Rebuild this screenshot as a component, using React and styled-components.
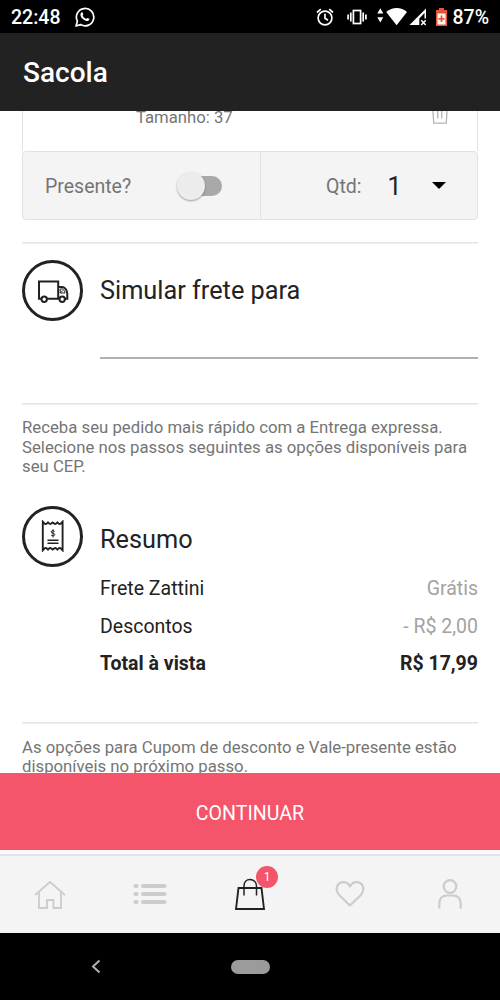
import { useState } from "react";
import styled, { createGlobalStyle } from "styled-components";

const GlobalStyle=createGlobalStyle`
  *{
    box-sizing: border-box;
  }
  body{
    margin: 0;
    background-color: #ffffff;
  }
  p, h1, h2{
    margin: 0;
    font-weight: 400;
  }
`
const Screen=styled.div`
  width: 500px;
  height: 1000px;
  display: flex;
  flex-direction: column;
  overflow: hidden;
  background-color: #ffffff;
  font-family: Roboto, "Liberation Sans", sans-serif;
  color: #222222;
`
const StatusBar=styled.div`
  height: 33px;
  flex-shrink: 0;
  display: flex;
  align-items: center;
  justify-content: space-between;
  padding: 1px 11px 0 11px;
  background-color: #000000;
  color: #ffffff;
`
const StatusGroup=styled.div`
  display: flex;
  align-items: center;
`
const StatusText=styled.p`
  margin-left: ${props=>props.$gap || 0}px;
  padding-top: 2px;
  font-size: 19.5px;
  line-height: 24px;
  font-weight: 500;
`
const StatusIcon=styled.svg`
  display: block;
  margin-left: ${props=>props.$gap || 0}px;
`
const Header=styled.header`
  height: 78px;
  flex-shrink: 0;
  display: flex;
  align-items: center;
  padding: 2px 23px 0 23px;
  background-color: #222222;
`
const Title=styled.h1`
  font-size: 28px;
  line-height: 32px;
  font-weight: 500;
  color: #ffffff;
`
const Content=styled.main`
  height: 662px;
  flex-shrink: 0;
  overflow: hidden;
  padding: 0 22px;
`
const Product=styled.div`
  height: 40px;
  display: flex;
  justify-content: space-between;
  align-items: flex-start;
  padding: 0 29px 0 113px;
  border-left: 1px solid #e2e2e2;
  border-right: 1px solid #e2e2e2;
`
const Size=styled.p`
  font-size: 16.7px;
  line-height: 20px;
  margin-top: -3px;
  color: #757575;
`
const Options=styled.div`
  height: 69px;
  display: grid;
  grid-template-columns: 237px 1fr;
  border: 1px solid #e2e2e2;
  border-radius: 4px;
  background-color: #f4f4f4;
`
const Option=styled.div`
  display: flex;
  align-items: center;
  padding-left: ${props=>props.$left}px;
  border-left: ${props=>props.$divided ? "1px solid #e2e2e2" : "none"};
`
const OptionLabel=styled.p`
  padding-top: 2px;
  font-size: 19.5px;
  line-height: 24px;
  color: #757575;
`
const Toggle=styled.button`
  width: 46px;
  height: 30px;
  display: flex;
  align-items: center;
  margin-left: 46px;
  padding: 0;
  border: none;
  background: none;
`
const Thumb=styled.span`
  width: 28px;
  height: 28px;
  flex-shrink: 0;
  border-radius: 50%;
  background-color: #ececec;
  box-shadow: 0 1px 2px rgba(0,0,0,0.35);
  z-index: 1;
  transform: translateX(${props=>props.$on ? 16 : 0}px);
`
const Track=styled.span`
  width: 37px;
  height: 20px;
  flex-shrink: 0;
  margin-left: -20px;
  border-radius: 10px;
  background-color: #a9a9a9;
`
const Quantity=styled.p`
  width: 12px;
  margin-left: 26px;
  padding-top: 2px;
  font-size: 25px;
  line-height: 30px;
`
const Caret=styled.span`
  margin-left: 32px;
  border-left: 7px solid transparent;
  border-right: 7px solid transparent;
  border-top: 7px solid #000000;
`
const Divider=styled.div`
  height: 2px;
  margin-top: ${props=>props.$top}px;
  border-top: 1px solid #e4e4e4;
  background-color: #f0f0f0;
`
const Section=styled.section`
  display: flex;
  margin-top: ${props=>props.$top}px;
`
const Circle=styled.div`
  width: 61px;
  height: 61px;
  flex-shrink: 0;
  display: flex;
  align-items: center;
  justify-content: center;
  border: 3px solid #222222;
  border-radius: 50%;
`
const SectionBody=styled.div`
  flex: 1;
  margin-left: 17px;
`
const SectionTitle=styled.h2`
  font-size: 25.3px;
  line-height: 30px;
  padding-top: ${props=>props.$top}px;
`
const CepInput=styled.input`
  display: block;
  width: 100%;
  height: 40px;
  margin-top: 13px;
  padding: 0;
  border: none;
  border-bottom: 2px solid #b0b0b0;
  border-radius: 0;
  outline: none;
  background: none;
  font: inherit;
`
const Note=styled.p`
  margin-top: ${props=>props.$top}px;
  font-size: 16.75px;
  line-height: 19.5px;
  white-space: nowrap;
  color: #757575;
`
const Rows=styled.div`
  margin-top: 15px;
`
const SummaryRow=styled.div`
  height: 37.5px;
  display: flex;
  align-items: center;
  justify-content: space-between;
  font-size: 19.5px;
  font-weight: ${props=>props.$total ? 700 : 400};
`
const Amount=styled.span`
  color: ${props=>props.$total ? "#222222" : "#a2a2a2"};
`
const ContinueButton=styled.button`
  height: 77px;
  flex-shrink: 0;
  padding: 3px 0 0 0;
  border: none;
  background-color: #f4556b;
  color: #ffffff;
  font-family: inherit;
  font-size: 19.6px;
`
const TabBar=styled.nav`
  height: 83px;
  flex-shrink: 0;
  display: grid;
  grid-template-columns: repeat(5, 1fr);
  border-top: 4px solid #fafafa;
  box-shadow: inset 0 2px 0 #e2e2e7;
  background-color: #f4f4f4;
`
const Tab=styled.div`
  position: relative;
  display: flex;
  align-items: center;
  justify-content: center;
  padding-top: ${props=>props.$drop || 0}px;
`
const Badge=styled.span`
  position: absolute;
  top: 12px;
  left: 56px;
  width: 22px;
  height: 22px;
  border-radius: 50%;
  background-color: #f4556b;
  color: #ffffff;
  font-size: 12px;
  line-height: 23px;
  text-align: center;
`
const SystemBar=styled.div`
  flex: 1;
  display: grid;
  grid-template-columns: 192px 116px 192px;
  align-items: center;
  justify-items: center;
  background-color: #000000;
`
const HomePill=styled.span`
  width: 39px;
  height: 14px;
  border-radius: 7px;
  background-color: #9b9b9b;
`

const summary=[
  {label:"Frete Zattini", value:"Grátis"},
  {label:"Descontos", value:"- R$ 2,00"},
  {label:"Total à vista", value:"R$ 17,99", total:true},
];

const WhatsappIcon=()=>(
  <StatusIcon $gap={15} width="20" height="20" viewBox="0 0 20 20" fill="none">
    <path d="M1 19l1.4-4.8A8.7 8.7 0 1 1 5.6 17.6z" stroke="#fff" strokeWidth="1.7" strokeLinejoin="round"/>
    <path d="M6.2 5.6c.5-.5 1.1-.5 1.3 0l.8 1.7c.1.4-.6 1.1-.6 1.4.8 1.6 1.9 2.5 3.4 3.1.4-.1.9-1 1.3-.9l1.8.9c.4.2.3.6.1.9-.7 1.2-1.9 1.6-3.1 1.2-3-.9-4.900-2.900-5.600-5.200-.3-1.200-.1-2.300.6-3.100z" fill="#fff"/>
  </StatusIcon>
)

const AlarmIcon=()=>(
  <StatusIcon width="18" height="18" viewBox="0 0 18 18" fill="none" stroke="#fff" strokeWidth="1.7">
    <circle cx="9" cy="10" r="6.9"/>
    <path d="M9 5.8v4.5l3 2M1 4.5L4.8 1.2M17 4.500L13.200 1.200"/>
  </StatusIcon>
)

const VibrateIcon=()=>(
  <StatusIcon $gap={13} width="20" height="16" viewBox="0 0 20 16" fill="none" stroke="#fff" strokeWidth="1.7">
    <rect x="6.4" y="1.5" width="7.2" height="13"/>
    <path d="M3.8 3.500v9M16.200 3.500v9M1.100 5.500v5M18.900 5.500v5"/>
  </StatusIcon>
)

const NetworkIcon=()=>(
  <StatusIcon $gap={10} width="50" height="18" viewBox="0 0 50 18" fill="#fff">
    <path d="M3.3.2l3 5.200H.3zM3.300 14.500l-3-5.200h6z"/>
    <path d="M9.200 4C15.500-1.200 24-1.200 30 4L19.600 17.200z"/>
    <path fillRule="evenodd" d="M49 .5v10h-1.500V5.100L42.300 10.500v6.500H32.500z"/>
    <path d="M44.200 12.200l4.500 4.700M48.700 12.200l-4.500 4.700" stroke="#fff" strokeWidth="1.5"/>
  </StatusIcon>
)

const BatteryIcon=()=>(
  <StatusIcon $gap={9} width="11" height="18" viewBox="0 0 11 18">
    <path d="M3 0h5v2h3v16H0V2h3z" fill="#e8543a"/>
    <path d="M1.500 5.500h8v11h-8z" fill="#fff4ee"/>
    <path d="M5.500 7.500V14M2.500 10.800h6" stroke="#e8543a" strokeWidth="1.7"/>
  </StatusIcon>
)

const TrashIcon=()=>(
  <svg width="16" height="13" viewBox="0 0 16 13" fill="none" stroke="#b5b5b5" strokeWidth="1.3">
    <path d="M1 0l.7 12.200h12.600L15 0M5.700 0v7.500M9.700 0v7.500"/>
  </svg>
)

const TruckIcon=()=>(
  <svg width="32" height="24" viewBox="0 0 32 24" fill="none" stroke="#222" strokeWidth="2">
    <path d="M4.500 19.800H2V2.500h19.200v17.300H9.500M21.200 19.800h1.500"/>
    <circle cx="7.200" cy="20.200" r="2.700"/>
    <circle cx="25.200" cy="20.200" r="2.700"/>
    <path d="M21 8h4.500c2.800.8 4.600 3.800 4.800 7v4.800h-2.400"/>
    <path d="M23.200 10h2.300c1.500.7 2.100 2 2.500 4h-4.800zM23.500 13.800l2.500-2.500" strokeWidth="1"/>
  </svg>
)

const ReceiptIcon=()=>(
  <svg width="24" height="32" viewBox="0 0 24 32" fill="none" stroke="#222" strokeWidth="1.9">
    <path d="M1.800 30.300V1.700l1.900 2q1.300.8 2.600-.6l.7-.7.7.7q1.300 1.400 2.600.4l1.400-1.100 1.400 1.100q1.300 1 2.600-.4l.7-.7.7.7q1.300 1.400 2.600.6l1.900-2v28.600l-1.900-2q-1.300-.8-2.600.6l-.7.7-.7-.7q-1.300-1.400-2.600-.4l-1.400 1.100-1.400-1.100q-1.300-1-2.600.4l-.7.7-.7-.7q-1.300-1.400-2.600-.6z"/>
    <path d="M13.700 11.500c-.3-1-3.500-1.300-3.500.4s3.600.9 3.600 2.700-3.400 1.400-3.700.3M12 9.200v8.300" strokeWidth="1"/>
    <path d="M6.500 20.300h11M6.500 23.300h11" strokeWidth="1.500"/>
  </svg>
)

const HomeIcon=()=>(
  <svg width="32" height="30" viewBox="0 0 32 30" fill="none" stroke="#cccccc" strokeWidth="1.8">
    <path d="M1 15L16 2l15 13M5 12v16h8v-8h6.500v8H27V12"/>
  </svg>
)

const ListIcon=()=>(
  <svg width="34" height="22" viewBox="0 0 34 22" stroke="#cccccc" strokeWidth="4" strokeLinecap="round">
    <path d="M2.500 3h1M10 3h21.500M2.500 11h1M10 11h21.500M2.500 19h1M10 19h21.500"/>
  </svg>
)

const BagIcon=()=>(
  <svg width="32" height="34" viewBox="0 0 32 34" fill="none" stroke="#222" strokeWidth="1.9">
    <path d="M4.500 11h23l2.500 21H2z"/>
    <path d="M10 18.500V9c0-3.800 2.500-6.500 6-6.500s6.500 2.700 6.500 6.500v9.500" strokeWidth="1.5"/>
  </svg>
)

const HeartIcon=()=>(
  <svg width="30" height="28" viewBox="0 0 30 28" fill="none" stroke="#cccccc" strokeWidth="2.2" strokeLinejoin="round">
    <path d="M15 25.500L4.200 15C-1 9 2.500 2.200 8.500 2.200c3 0 5 1.500 6.500 4.300 1.500-2.800 3.500-4.300 6.500-4.300 6 0 9.500 6.800 4.300 12.800z"/>
  </svg>
)

const UserIcon=()=>(
  <svg width="26" height="32" viewBox="0 0 26 32" fill="none" stroke="#cccccc" strokeWidth="2.2">
    <circle cx="13" cy="8.500" r="6.300"/>
    <path d="M2.300 30.500v-4.500c0-5.500 3-8.500 8-8.500h5.400c5 0 8 3 8 8.500v4.500"/>
  </svg>
)

function App() {
  const [gift,setGift]=useState(false);
  const [cep,setCep]=useState("");

  return (
    <>
      <GlobalStyle/>
      <Screen>
        <StatusBar>
          <StatusGroup>
            <StatusText>22:48</StatusText>
            <WhatsappIcon/>
          </StatusGroup>
          <StatusGroup>
            <AlarmIcon/>
            <VibrateIcon/>
            <NetworkIcon/>
            <BatteryIcon/>
            <StatusText $gap={5}>87%</StatusText>
          </StatusGroup>
        </StatusBar>
        <Header>
          <Title>Sacola</Title>
        </Header>
        <Content>
          <Product>
            <Size>Tamanho: 37</Size>
            <TrashIcon/>
          </Product>
          <Options>
            <Option $left={22}>
              <OptionLabel>Presente?</OptionLabel>
              <Toggle onClick={()=>{setGift(!gift)}}>
                <Thumb $on={gift}/>
                <Track/>
              </Toggle>
            </Option>
            <Option $left={65} $divided>
              <OptionLabel>Qtd:</OptionLabel>
              <Quantity>1</Quantity>
              <Caret/>
            </Option>
          </Options>
          <Divider $top={22}/>
          <Section $top={16}>
            <Circle><TruckIcon/></Circle>
            <SectionBody>
              <SectionTitle $top={16}>Simular frete para</SectionTitle>
              <CepInput value={cep} onChange={(event)=>{setCep(event.target.value)}} autoComplete="off"/>
            </SectionBody>
          </Section>
          <Divider $top={44}/>
          <Note $top={13}>
            Receba seu pedido mais rápido com a Entrega expressa.<br/>
            Selecione nos passos seguintes as opções disponíveis para<br/>
            seu CEP.
          </Note>
          <Section $top={29.3}>
            <Circle><ReceiptIcon/></Circle>
            <SectionBody>
              <SectionTitle $top={19}>Resumo</SectionTitle>
              <Rows>
                {summary.map((row)=>(
                  <SummaryRow key={row.label} $total={row.total}>
                    <span>{row.label}</span>
                    <Amount $total={row.total}>{row.value}</Amount>
                  </SummaryRow>
                ))}
              </Rows>
            </SectionBody>
          </Section>
          <Divider $top={40}/>
          <Note $top={13.5}>
            As opções para Cupom de desconto e Vale-presente estão<br/>
            disponíveis no próximo passo.
          </Note>
        </Content>
        <ContinueButton>CONTINUAR</ContinueButton>
        <TabBar>
          <Tab $drop={2}><HomeIcon/></Tab>
          <Tab><ListIcon/></Tab>
          <Tab>
            <BagIcon/>
            <Badge>1</Badge>
          </Tab>
          <Tab $drop={1}><HeartIcon/></Tab>
          <Tab $drop={1}><UserIcon/></Tab>
        </TabBar>
        <SystemBar>
          <svg width="10" height="15" viewBox="0 0 10 15" fill="none" stroke="#b0b0b0" strokeWidth="2">
            <path d="M8.500 1.500L2 7.500 8.500 13.500"/>
          </svg>
          <HomePill/>
        </SystemBar>
      </Screen>
    </>
  );
}

export default App;
